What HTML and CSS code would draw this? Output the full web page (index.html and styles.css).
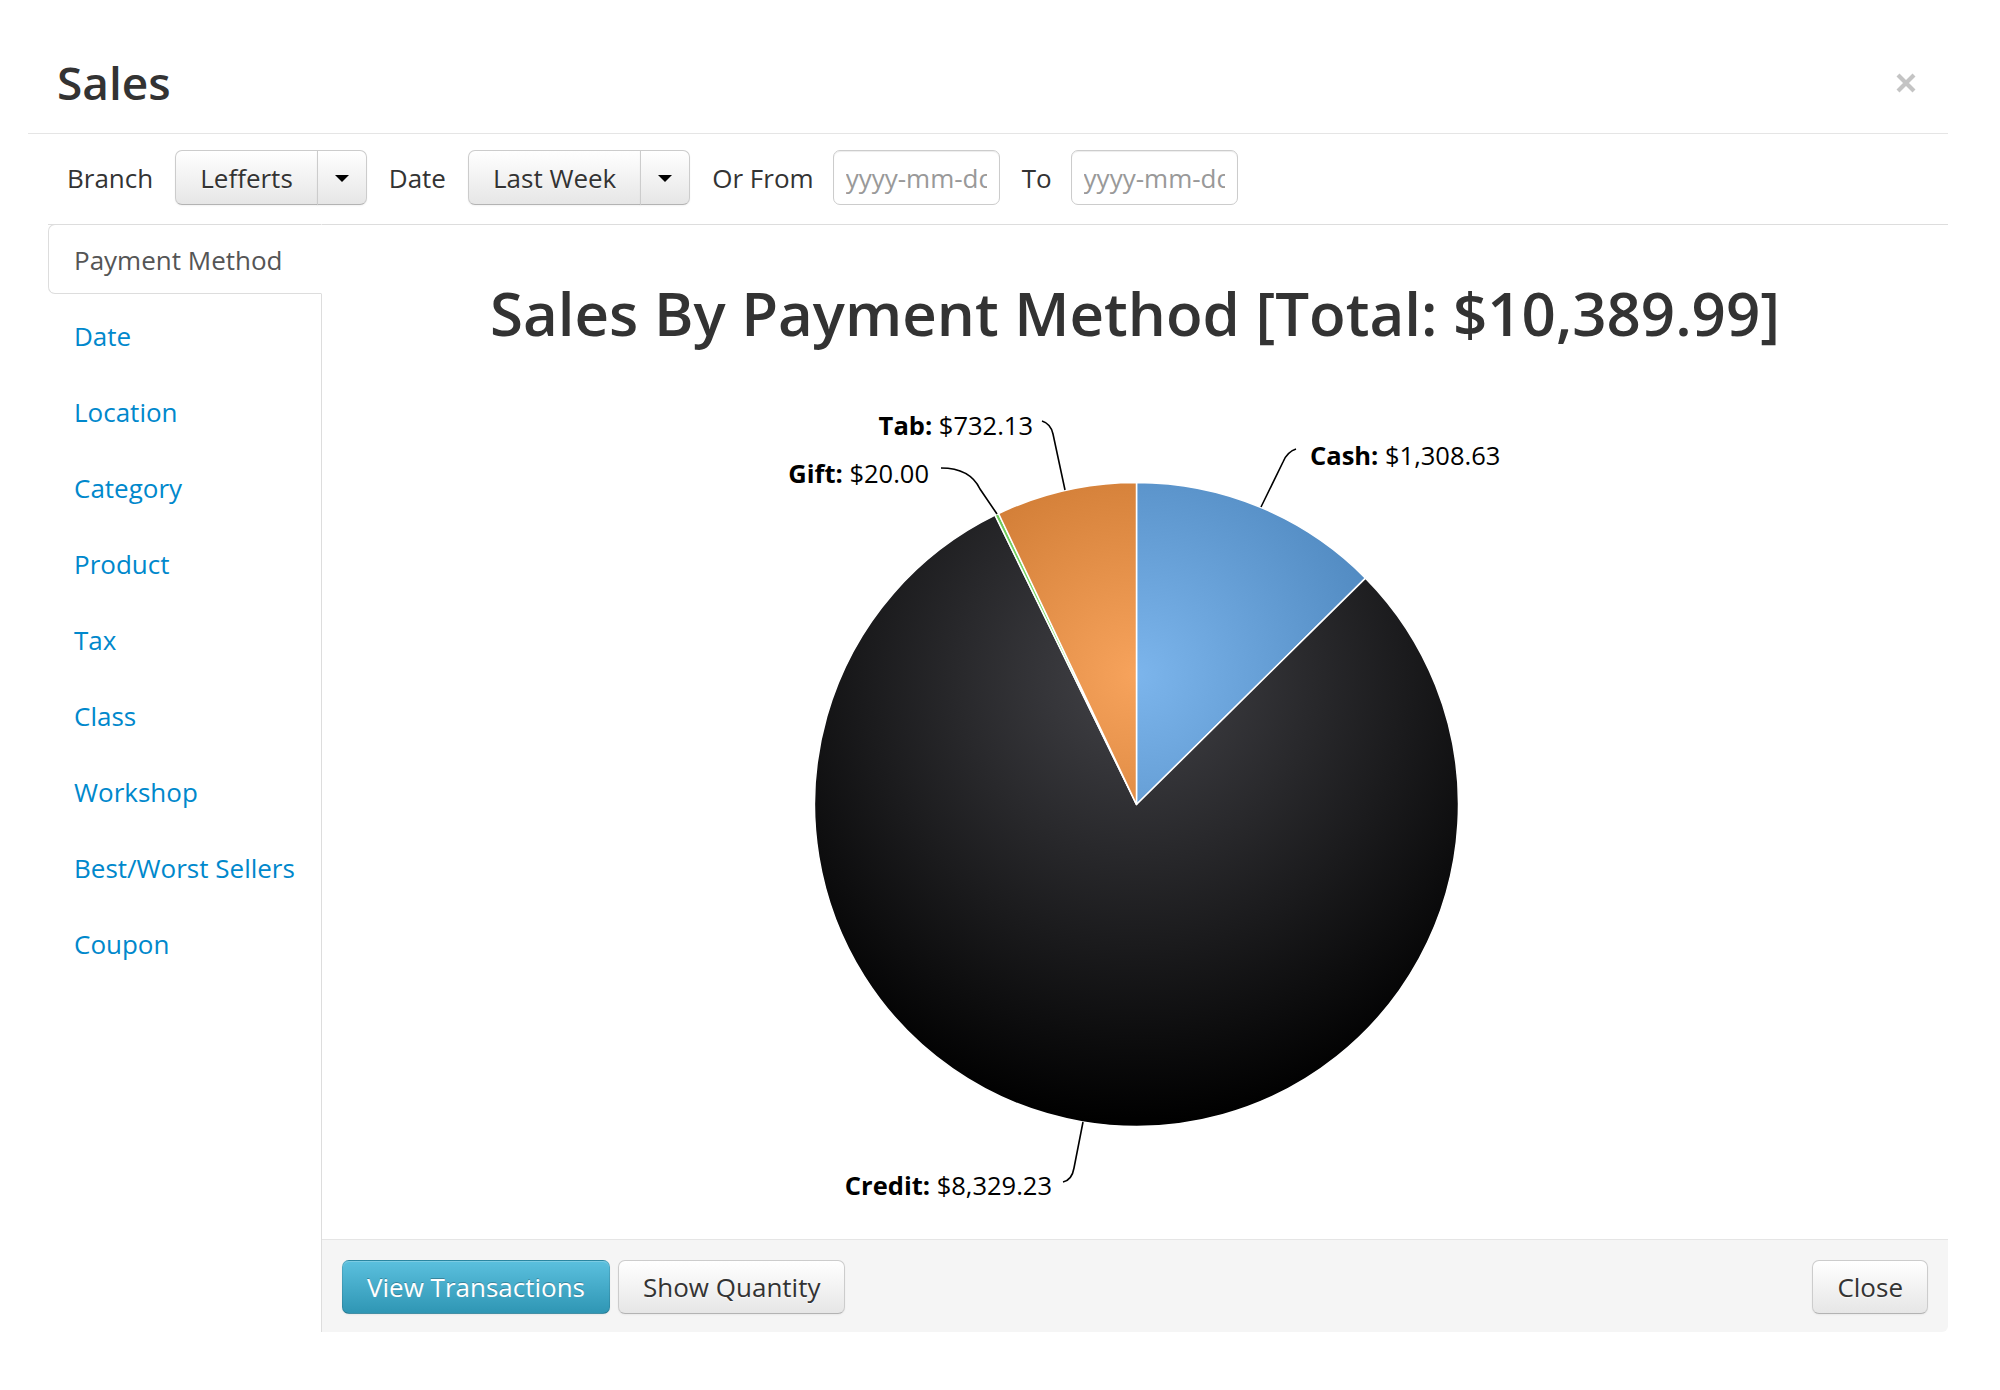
FILE: index.html
```html
<!DOCTYPE html>
<html>
<head>
<meta charset="utf-8">
<title>Sales</title>
<link rel="stylesheet" href="styles.css">
</head>
<body>
<div class="modal">
  <div class="modal-header">
    <h1 class="modal-title">Sales</h1>
    <svg class="close" width="20" height="20" viewBox="0 0 20 20"><path d="M2 2L18 18M18 2L2 18" stroke="#c4c4c4" stroke-width="4.2" stroke-linecap="butt"/></svg>
  </div>
  <div class="modal-body">
    <div class="filters">
      <span class="flabel">Branch</span>
      <div class="btn-group">
        <span class="btn btn-main">Lefferts</span><span class="btn btn-caret"><span class="caret"></span></span>
      </div>
      <span class="flabel">Date</span>
      <div class="btn-group">
        <span class="btn btn-main">Last Week</span><span class="btn btn-caret"><span class="caret"></span></span>
      </div>
      <span class="flabel">Or From</span>
      <input class="date-input" type="text" placeholder="yyyy-mm-dd">
      <span class="flabel">To</span>
      <input class="date-input" type="text" placeholder="yyyy-mm-dd">
    </div>
    <div class="report">
      <ul class="side-nav">
        <li class="side-item active">Payment Method</li>
        <li class="side-item"><a>Date</a></li>
        <li class="side-item"><a>Location</a></li>
        <li class="side-item"><a>Category</a></li>
        <li class="side-item"><a>Product</a></li>
        <li class="side-item"><a>Tax</a></li>
        <li class="side-item"><a>Class</a></li>
        <li class="side-item"><a>Workshop</a></li>
        <li class="side-item"><a>Best/Worst Sellers</a></li>
        <li class="side-item"><a>Coupon</a></li>
      </ul>
      <div class="main">
        <div class="chart">
          <h2 class="chart-title">Sales By Payment Method [Total: $10,389.99]</h2>
          <svg class="pie" width="1626" height="883" viewBox="0 0 1626 883">
            <defs>
              <radialGradient id="gCash" gradientUnits="userSpaceOnUse" cx="814.5" cy="319" r="450">
                <stop offset="0" stop-color="#7cb5ec"/><stop offset="1" stop-color="rgb(48,105,160)"/>
              </radialGradient>
              <radialGradient id="gCredit" gradientUnits="userSpaceOnUse" cx="814.5" cy="319" r="450">
                <stop offset="0" stop-color="#434348"/><stop offset="1" stop-color="#000"/>
              </radialGradient>
              <radialGradient id="gGift" gradientUnits="userSpaceOnUse" cx="814.5" cy="319" r="450">
                <stop offset="0" stop-color="#90ed7d"/><stop offset="1" stop-color="rgb(68,161,49)"/>
              </radialGradient>
              <radialGradient id="gTab" gradientUnits="userSpaceOnUse" cx="814.5" cy="319" r="450">
                <stop offset="0" stop-color="#f7a35c"/><stop offset="1" stop-color="rgb(171,87,16)"/>
              </radialGradient>
            </defs>
            <g class="slices">
              <path fill="url(#gCash)" d="M814.5,448.5 L814.5,126.5 A322,322 0 0 1 1043.5,222.1 Z"/>
              <path fill="url(#gCredit)" d="M814.5,448.5 L1043.5,222.1 A322,322 0 1 1 673.05,159.2 Z"/>
              <path fill="url(#gGift)" d="M814.5,448.5 L673.05,159.2 A322,322 0 0 1 676.55,157.5 Z"/>
              <path fill="url(#gTab)" d="M814.5,448.5 L676.55,157.5 A322,322 0 0 1 814.5,126.5 Z"/>
            </g>
            <g class="connectors">
              <path d="M974,93 Q965,96 961,106 L939,151"/>
              <path d="M720,65 Q729,68 731,78 L743,134"/>
              <path d="M619,112 Q648,112 658,133 L675,158"/>
              <path d="M741,826 Q750,824 752,812 L761,766"/>
            </g>
            <g class="labels">
              <text x="988" y="109"><tspan class="lb">Cash:</tspan> $1,308.63</text>
              <text x="711" y="79" text-anchor="end"><tspan class="lb">Tab:</tspan> $732.13</text>
              <text x="607" y="127" text-anchor="end"><tspan class="lb">Gift:</tspan> $20.00</text>
              <text x="730" y="839" text-anchor="end"><tspan class="lb">Credit:</tspan> $8,329.23</text>
            </g>
          </svg>
        </div>
        <div class="modal-footer">
          <div class="footer-left">
            <span class="btn btn-info">View Transactions</span>
            <span class="btn">Show Quantity</span>
          </div>
          <span class="btn">Close</span>
        </div>
      </div>
    </div>
  </div>
</div>
</body>
</html>
```

FILE: styles.css
```css
html, body {
  margin: 0;
  padding: 0;
  background: #ffffff;
}
body {
  font-family: "Open Sans", "Liberation Sans", sans-serif;
  font-size: 26px;
  color: #333333;
}
.modal {
  margin-left: 28px;
  width: 1920px;
  background: #ffffff;
  border-radius: 6px;
}
.modal-header {
  display: flex;
  align-items: center;
  justify-content: space-between;
  padding: 51px 32px 19px 29px;
  border-bottom: 1px solid #e5e5e5;
}
.modal-title {
  margin: 0;
  font-size: 46px;
  line-height: 63px;
  font-weight: 600;
  color: #333333;
}
.close {
  display: block;
}
.modal-body {
  padding-left: 20px;
}
.filters {
  display: flex;
  align-items: center;
  gap: 22px;
  padding: 16px 0 19px 19px;
  border-bottom: 1px solid #dddddd;
}
.flabel {
  line-height: 36px;
  color: #333333;
}
.btn-group {
  display: flex;
}
.btn {
  display: inline-flex;
  align-items: center;
  justify-content: center;
  box-sizing: border-box;
  height: 54px;
  padding: 0 24px;
  line-height: 36px;
  color: #333333;
  background-color: #f5f5f5;
  background-image: linear-gradient(to bottom, #ffffff, #e6e6e6);
  border: 1px solid #cccccc;
  border-bottom-color: #b3b3b3;
  border-radius: 7px;
  box-shadow: inset 0 1px 0 rgba(255,255,255,0.2), 0 1px 2px rgba(0,0,0,0.05);
  text-shadow: 0 1px 1px rgba(255,255,255,0.75);
  white-space: nowrap;
}
.btn-group .btn {
  height: 55px;
}
.btn-main {
  border-radius: 7px 0 0 7px;
}
.btn-caret {
  width: 50px;
  padding: 0;
  margin-left: -1px;
  border-radius: 0 7px 7px 0;
}
.caret {
  display: block;
  width: 0;
  height: 0;
  border-top: 7px solid #000000;
  border-left: 7px solid transparent;
  border-right: 7px solid transparent;
  margin-top: 2px;
}
.date-input {
  box-sizing: border-box;
  width: 167px;
  height: 55px;
  margin-left: -3px;
  padding: 0 12px;
  font-family: "Open Sans", "Liberation Sans", sans-serif;
  font-size: 26px;
  color: #555555;
  border: 1px solid #cccccc;
  border-radius: 7px;
  box-shadow: inset 0 1px 1px rgba(0,0,0,0.075);
  outline: none;
}
.date-input::placeholder {
  color: #999999;
}
.report {
  display: flex;
  margin-top: -1px;
}
.side-nav {
  list-style: none;
  margin: 0;
  padding: 0;
  width: 273px;
  border-right: 1px solid #dddddd;
}
.side-item {
  margin-right: -1px;
  margin-bottom: 6px;
  padding: 17px 0 15px 25px;
  line-height: 36px;
  border: 1px solid transparent;
  border-radius: 7px 0 0 7px;
}
.side-item a {
  color: #0088cc;
  text-decoration: none;
}
.side-item.active {
  position: relative;
  background: #ffffff;
  color: #555555;
  border-color: #dddddd;
  border-right-color: transparent;
}
.main {
  flex: 1;
  display: flex;
  flex-direction: column;
}
.chart {
  height: 1015px;
  box-sizing: border-box;
  padding-top: 47px;
}
.chart-title {
  margin: 0;
  text-align: center;
  font-size: 60px;
  line-height: 85px;
  font-weight: 600;
  color: #333333;
}
.pie {
  display: block;
}
.slices path {
  stroke: #ffffff;
  stroke-width: 1.5;
  stroke-linejoin: round;
}
.connectors path {
  fill: none;
  stroke: #000000;
  stroke-width: 1.6;
}
.labels text {
  font-family: "Open Sans", "Liberation Sans", sans-serif;
  font-size: 25.5px;
  fill: #000000;
}
.labels .lb {
  font-weight: 700;
}
.modal-footer {
  display: flex;
  justify-content: space-between;
  align-items: center;
  padding: 20px 20px 18px 20px;
  background: #f5f5f5;
  border-top: 1px solid #e5e5e5;
  border-bottom-right-radius: 6px;
}
.footer-left {
  display: flex;
  gap: 8px;
}
.btn-info {
  color: #ffffff;
  background-color: #49afcd;
  background-image: linear-gradient(to bottom, #5bc0de, #2f96b4);
  border-color: rgba(0,0,0,0.1) rgba(0,0,0,0.1) rgba(0,0,0,0.25);
  text-shadow: 0 -1px 0 rgba(0,0,0,0.25);
}
```
